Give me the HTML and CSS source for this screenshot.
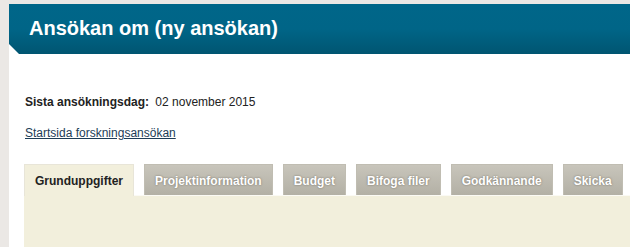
FILE: index.html
```html
<!DOCTYPE html>
<html lang="sv">
<head>
<meta charset="utf-8">
<title>Ansökan om (ny ansökan)</title>
<link rel="stylesheet" href="styles.css">
</head>
<body>
<div class="page">
  <header class="banner">
    <h1 class="banner-title">Ansökan om (ny ansökan)</h1>
  </header>
  <section class="info">
    <p class="deadline"><span class="deadline-label">Sista ansökningsdag:</span> 02 november 2015</p>
    <p class="home-link"><a href="#">Startsida forskningsansökan</a></p>
  </section>
  <nav class="tabs">
    <a class="tab tab-active" href="#">Grunduppgifter</a>
    <a class="tab" href="#">Projektinformation</a>
    <a class="tab" href="#">Budget</a>
    <a class="tab" href="#">Bifoga filer</a>
    <a class="tab" href="#">Godkännande</a>
    <a class="tab" href="#">Skicka</a>
  </nav>
  <div class="panel"></div>
</div>
</body>
</html>
```

FILE: styles.css
```css
html, body {
  margin: 0;
  padding: 0;
  height: 100%;
  overflow: hidden;
}
body {
  background: #ebe8e5;
  font-family: "Liberation Sans", Arial, sans-serif;
  color: #222;
}
.page {
  margin: 4px 0 0 9px;
  background: #fff;
  min-height: 243px;
  display: flex;
  flex-direction: column;
}
.banner {
  height: 50px;
  background: linear-gradient(to bottom, #006689 0%, #006587 50%, #005571 100%);
  clip-path: polygon(0 0, 100% 0, 100% 100%, 10px 100%, 0 calc(100% - 10px));
  display: flex;
  align-items: center;
  padding-left: 20px;
}
.banner-title {
  margin: 0;
  color: #fff;
  font-size: 20px;
  font-weight: bold;
  line-height: 24px;
  position: relative;
  top: -1px;
}
.info {
  padding: 41px 0 0 16px;
  font-size: 12px;
  line-height: 14px;
}
.info p {
  margin: 0;
}
.deadline-label {
  font-weight: bold;
  margin-right: 3px;
}
.home-link {
  margin-top: 17px !important;
}
.home-link a {
  color: #1d3d57;
  text-decoration: underline;
}
.tabs {
  display: flex;
  gap: 10px;
  margin: 24px 0 0 15px;
  border-bottom: 1px solid #fbfaf4;
}
.tab {
  flex: 0 0 auto;
  white-space: nowrap;
  display: block;
  height: 28px;
  line-height: 28px;
  padding: 2px 10px 0;
  font-size: 12px;
  font-weight: bold;
  text-decoration: none;
  color: #fff;
  background: linear-gradient(to bottom, #c8c5bb 0%, #b3b0a5 100%);
  border: 1px solid #c0bdb2;
  border-bottom: none;
  text-shadow: 0 0 2px rgba(60, 55, 45, 0.6);
}
.tab-active {
  color: #222;
  background: #f2efdc;
  border-color: #e8e5d8;
  text-shadow: none;
  margin-bottom: -1px;
  height: 29px;
}
.panel {
  flex: 1;
  margin-left: 15px;
  background: #f2efdc;
}
```
